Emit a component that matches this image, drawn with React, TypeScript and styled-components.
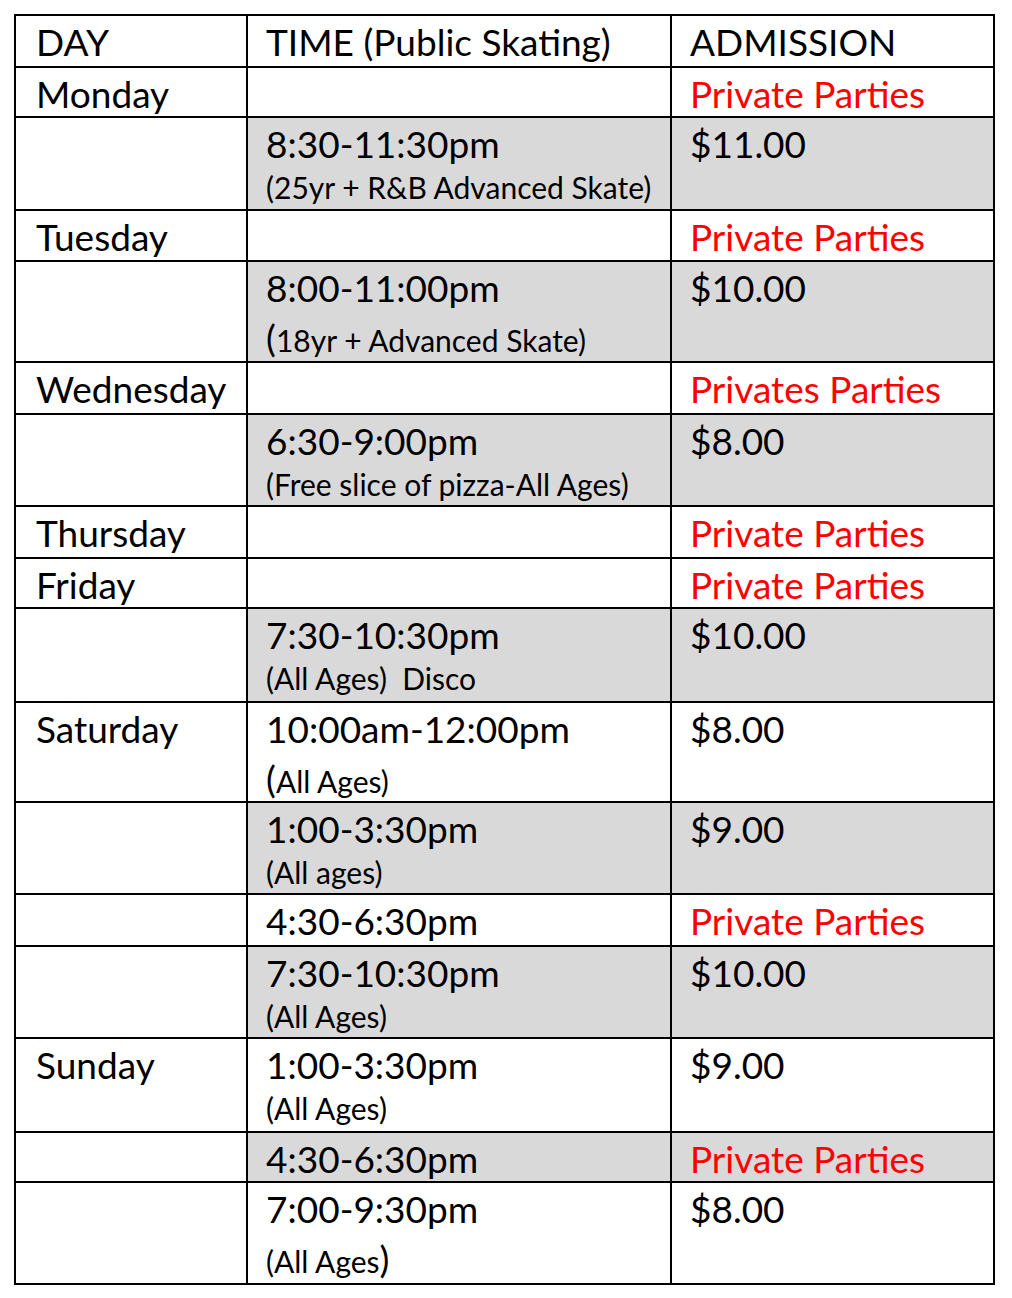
import React from "react";
import styled, { createGlobalStyle } from "styled-components";

const Global = createGlobalStyle`
  html, body { margin: 0; padding: 0; background: #fff; }
  body { font-family: Lato, "Liberation Sans", sans-serif; color: #000; }
`;

const Page = styled.div`
  padding: 14px 0 0 14px;
`;

const Grid = styled.div<{ $rows: string }>`
  display: grid;
  grid-template-columns: 230px 422px 321px;
  grid-template-rows: ${(p) => p.$rows};
  gap: 2px;
  padding: 2px;
  width: 981px;
  box-sizing: border-box;
  background: #000;
`;

const Cell = styled.div<{ $shaded?: boolean; $inset?: number }>`
  background: ${(p) => (p.$shaded ? "#d9d9d9" : "#fff")};
  padding: 4px 0 0 ${(p) => p.$inset ?? 18}px;
  display: flex;
  flex-direction: column;
  overflow: hidden;
`;

const Main = styled.div<{ $red?: boolean }>`
  font-size: 37px;
  line-height: 44px;
  color: ${(p) => (p.$red ? "#ff0000" : "#000")};
  white-space: nowrap;
`;

const Sub = styled.div<{ $tall?: boolean }>`
  font-size: 30px;
  line-height: ${(p) => (p.$tall ? "56px" : "42px")};
  white-space: nowrap;
`;

const BigParen = styled.span`
  font-size: 37px;
`;

type Row = {
  day?: string;
  time?: string;
  sub?: React.ReactNode;
  tallSub?: boolean;
  adm: string;
  red?: boolean;
  shaded?: boolean;
  h: number;
};

const rows: Row[] = [
  { day: "DAY", time: "TIME (Public Skating)", adm: "ADMISSION", h: 50 },
  { day: "Monday", adm: "Private Parties", red: true, h: 48 },
  { time: "8:30-11:30pm", sub: "(25yr + R&B Advanced Skate)", adm: "$11.00", shaded: true, h: 91 },
  { day: "Tuesday", adm: "Private Parties", red: true, h: 49 },
  {
    time: "8:00-11:00pm",
    sub: (
      <>
        <BigParen>(</BigParen>18yr + Advanced Skate)
      </>
    ),
    tallSub: true,
    adm: "$10.00",
    shaded: true,
    h: 99,
  },
  { day: "Wednesday", adm: "Privates Parties", red: true, h: 50 },
  { time: "6:30-9:00pm", sub: "(Free slice of pizza-All Ages)", adm: "$8.00", shaded: true, h: 90 },
  { day: "Thursday", adm: "Private Parties", red: true, h: 50 },
  { day: "Friday", adm: "Private Parties", red: true, h: 48 },
  { time: "7:30-10:30pm", sub: "(All Ages)\u00a0\u00a0Disco", adm: "$10.00", shaded: true, h: 92 },
  {
    day: "Saturday",
    time: "10:00am-12:00pm",
    sub: (
      <>
        <BigParen>(</BigParen>All Ages)
      </>
    ),
    tallSub: true,
    adm: "$8.00",
    h: 98,
  },
  { time: "1:00-3:30pm", sub: "(All ages)", adm: "$9.00", shaded: true, h: 90 },
  { time: "4:30-6:30pm", adm: "Private Parties", red: true, h: 50 },
  { time: "7:30-10:30pm", sub: "(All Ages)", adm: "$10.00", shaded: true, h: 90 },
  { day: "Sunday", time: "1:00-3:30pm", sub: "(All Ages)", adm: "$9.00", h: 92 },
  { time: "4:30-6:30pm", adm: "Private Parties", red: true, shaded: true, h: 48 },
  {
    time: "7:00-9:30pm",
    sub: (
      <>
        (All Ages<BigParen>)</BigParen>
      </>
    ),
    tallSub: true,
    adm: "$8.00",
    h: 100,
  },
];

export default function App() {
  const template = rows.map((r) => `${r.h}px`).join(" ");
  return (
    <Page>
      <Global />
      <Grid $rows={template}>
        {rows.map((r, i) => (
          <React.Fragment key={i}>
            <Cell $inset={20}>{r.day && <Main>{r.day}</Main>}</Cell>
            <Cell $shaded={r.shaded}>
              {r.time && <Main>{r.time}</Main>}
              {r.sub && <Sub $tall={r.tallSub}>{r.sub}</Sub>}
            </Cell>
            <Cell $shaded={r.shaded}>
              <Main $red={r.red}>{r.adm}</Main>
            </Cell>
          </React.Fragment>
        ))}
      </Grid>
    </Page>
  );
}
